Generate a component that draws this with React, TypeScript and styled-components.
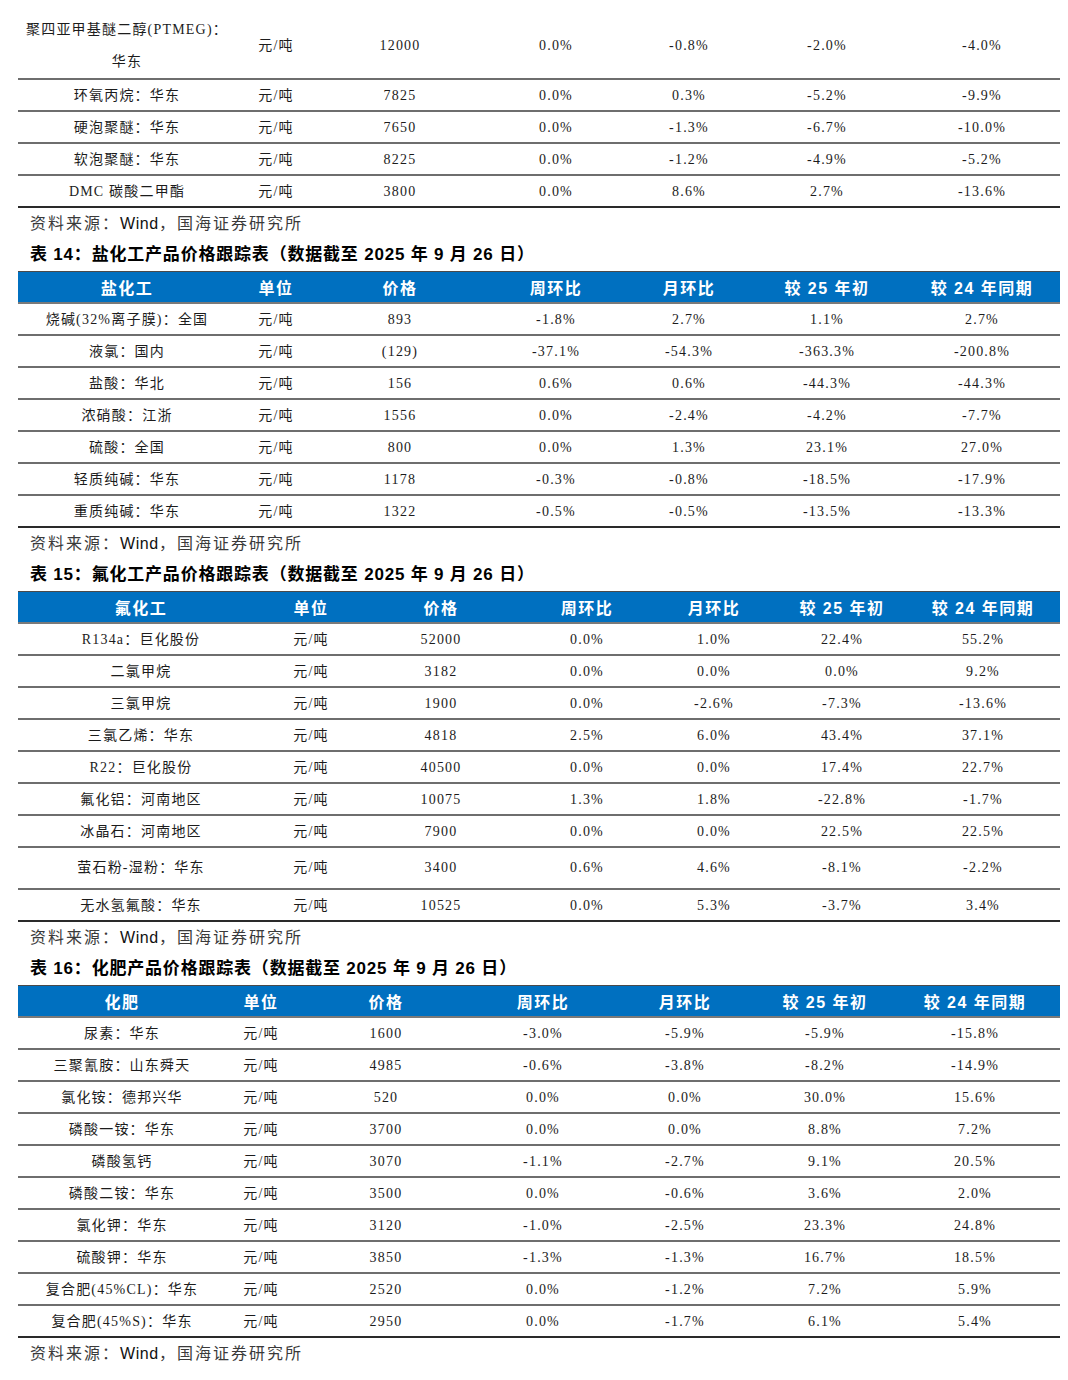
import React from "react";
import styled, { createGlobalStyle } from "styled-components";

const Global = createGlobalStyle`
  html, body { margin: 0; padding: 0; background: #fff; }
  body { font-family: "Liberation Serif", "Noto Sans CJK SC", serif; }
`;

const Page = styled.div`
  width: 1042px;
  padding: 0 8px 0 18px;
  display: flex;
  flex-direction: column;
`;

const Table = styled.div`
  display: flex;
  flex-direction: column;
  width: 1042px;
`;

const HeaderRow = styled.div<{ $cols: string }>`
  display: grid;
  grid-template-columns: ${(p) => p.$cols};
  height: 30px;
  align-items: center;
  justify-items: center;
  background: #0070c0;
  border-top: 1px solid #4a4a4a;
  border-bottom: 2px solid #7a7a7a;
`;

const HeaderCell = styled.div`
  color: #fff;
  font-family: "Liberation Sans", "Noto Sans CJK SC", sans-serif;
  font-weight: 700;
  font-size: 16px;
  letter-spacing: 1.5px;
  white-space: pre;
`;

const Row = styled.div<{ $cols: string; $h: number; $last?: boolean; $pt?: number }>`
  display: grid;
  grid-template-columns: ${(p) => p.$cols};
  box-sizing: border-box;
  height: ${(p) => p.$h}px;
  padding-top: ${(p) => p.$pt ?? 0}px;
  align-items: center;
  justify-items: center;
  border-bottom: 2px solid ${(p) => (p.$last ? "#2a2a2a" : "#6e6e6e")};
`;

const Cell = styled.div`
  font-family: "Liberation Serif", "Noto Sans CJK SC", serif;
  font-size: 14px;
  letter-spacing: 1.2px;
  color: #1c1c1c;
  text-align: center;
  line-height: 32px;
  white-space: nowrap;
`;

const Source = styled.div`
  height: 31px;
  line-height: 31px;
  padding-left: 12px;
  font-family: "Liberation Sans", "Noto Sans CJK SC", sans-serif;
  font-size: 16px;
  letter-spacing: 2px;
  color: #3a3a3a;
  b { font-weight: 400; color: #111; letter-spacing: 0.6px; }
`;

const Title = styled.div`
  height: 32px;
  line-height: 32px;
  padding-left: 12px;
  font-family: "Liberation Sans", "Noto Sans CJK SC", sans-serif;
  font-weight: 700;
  font-size: 17px;
  letter-spacing: 0.8px;
  color: #000;
  white-space: pre;
`;

type RowData = { c: React.ReactNode[]; h?: number };

const TableBlock: React.FC<{
  cols: string;
  head?: string[];
  rows: RowData[];
  firstPad?: number;
}> = ({ cols, head, rows, firstPad }) => (
  <Table>
    {head && (
      <HeaderRow $cols={cols}>
        {head.map((h, i) => (
          <HeaderCell key={i}>{h}</HeaderCell>
        ))}
      </HeaderRow>
    )}
    {rows.map((r, i) => (
      <Row
        key={i}
        $cols={cols}
        $h={r.h ?? 32}
        $pt={i === 0 ? firstPad : 0}
        $last={i === rows.length - 1}
      >
        {r.c.map((c, j) => (
          <Cell key={j}>{c}</Cell>
        ))}
      </Row>
    ))}
  </Table>
);

const SourceLine = () => (
  <Source>
    资料来源：<b>Wind</b>，国海证券研究所
  </Source>
);

const cols14 = "218px 80px 168px 144px 122px 154px 156px";
const cols15 = "246px 94px 166px 126px 128px 128px 154px";
const cols16 = "208px 70px 180px 134px 150px 130px 170px";

const U = "元/吨";

const t13: RowData[] = [
  {
    c: [
      <>
        聚四亚甲基醚二醇(PTMEG)：
        <br />
        华东
      </>,
      U, "12000", "0.0%", "-0.8%", "-2.0%", "-4.0%",
    ],
    h: 80,
  },
  { c: ["环氧丙烷：华东", U, "7825", "0.0%", "0.3%", "-5.2%", "-9.9%"] },
  { c: ["硬泡聚醚：华东", U, "7650", "0.0%", "-1.3%", "-6.7%", "-10.0%"] },
  { c: ["软泡聚醚：华东", U, "8225", "0.0%", "-1.2%", "-4.9%", "-5.2%"] },
  { c: ["DMC 碳酸二甲酯", U, "3800", "0.0%", "8.6%", "2.7%", "-13.6%"] },
];

const t14: RowData[] = [
  { c: ["烧碱(32%离子膜)：全国", U, "893", "-1.8%", "2.7%", "1.1%", "2.7%"] },
  { c: ["液氯：国内", U, "(129)", "-37.1%", "-54.3%", "-363.3%", "-200.8%"] },
  { c: ["盐酸：华北", U, "156", "0.6%", "0.6%", "-44.3%", "-44.3%"] },
  { c: ["浓硝酸：江浙", U, "1556", "0.0%", "-2.4%", "-4.2%", "-7.7%"] },
  { c: ["硫酸：全国", U, "800", "0.0%", "1.3%", "23.1%", "27.0%"] },
  { c: ["轻质纯碱：华东", U, "1178", "-0.3%", "-0.8%", "-18.5%", "-17.9%"] },
  { c: ["重质纯碱：华东", U, "1322", "-0.5%", "-0.5%", "-13.5%", "-13.3%"] },
];

const t15: RowData[] = [
  { c: ["R134a：巨化股份", U, "52000", "0.0%", "1.0%", "22.4%", "55.2%"] },
  { c: ["二氯甲烷", U, "3182", "0.0%", "0.0%", "0.0%", "9.2%"] },
  { c: ["三氯甲烷", U, "1900", "0.0%", "-2.6%", "-7.3%", "-13.6%"] },
  { c: ["三氯乙烯：华东", U, "4818", "2.5%", "6.0%", "43.4%", "37.1%"] },
  { c: ["R22：巨化股份", U, "40500", "0.0%", "0.0%", "17.4%", "22.7%"] },
  { c: ["氟化铝：河南地区", U, "10075", "1.3%", "1.8%", "-22.8%", "-1.7%"] },
  { c: ["冰晶石：河南地区", U, "7900", "0.0%", "0.0%", "22.5%", "22.5%"] },
  { c: ["萤石粉-湿粉：华东", U, "3400", "0.6%", "4.6%", "-8.1%", "-2.2%"], h: 42 },
  { c: ["无水氢氟酸：华东", U, "10525", "0.0%", "5.3%", "-3.7%", "3.4%"] },
];

const t16: RowData[] = [
  { c: ["尿素：华东", U, "1600", "-3.0%", "-5.9%", "-5.9%", "-15.8%"] },
  { c: ["三聚氰胺：山东舜天", U, "4985", "-0.6%", "-3.8%", "-8.2%", "-14.9%"] },
  { c: ["氯化铵：德邦兴华", U, "520", "0.0%", "0.0%", "30.0%", "15.6%"] },
  { c: ["磷酸一铵：华东", U, "3700", "0.0%", "0.0%", "8.8%", "7.2%"] },
  { c: ["磷酸氢钙", U, "3070", "-1.1%", "-2.7%", "9.1%", "20.5%"] },
  { c: ["磷酸二铵：华东", U, "3500", "0.0%", "-0.6%", "3.6%", "2.0%"] },
  { c: ["氯化钾：华东", U, "3120", "-1.0%", "-2.5%", "23.3%", "24.8%"] },
  { c: ["硫酸钾：华东", U, "3850", "-1.3%", "-1.3%", "16.7%", "18.5%"] },
  { c: ["复合肥(45%CL)：华东", U, "2520", "0.0%", "-1.2%", "7.2%", "5.9%"] },
  { c: ["复合肥(45%S)：华东", U, "2950", "0.0%", "-1.7%", "6.1%", "5.4%"] },
];

const tail = ["周环比", "月环比", "较 25 年初", "较 24 年同期"];

export default function App() {
  return (
    <>
      <Global />
      <Page>
        <TableBlock cols={cols14} rows={t13} firstPad={14} />
        <SourceLine />
        <Title>表 14：盐化工产品价格跟踪表（数据截至 2025 年 9 月 26 日）</Title>
        <TableBlock cols={cols14} head={["盐化工", "单位", "价格", ...tail]} rows={t14} />
        <SourceLine />
        <Title>表 15：氟化工产品价格跟踪表（数据截至 2025 年 9 月 26 日）</Title>
        <TableBlock cols={cols15} head={["氟化工", "单位", "价格", ...tail]} rows={t15} />
        <SourceLine />
        <Title>表 16：化肥产品价格跟踪表（数据截至 2025 年 9 月 26 日）</Title>
        <TableBlock cols={cols16} head={["化肥", "单位", "价格", ...tail]} rows={t16} />
        <SourceLine />
      </Page>
    </>
  );
}
